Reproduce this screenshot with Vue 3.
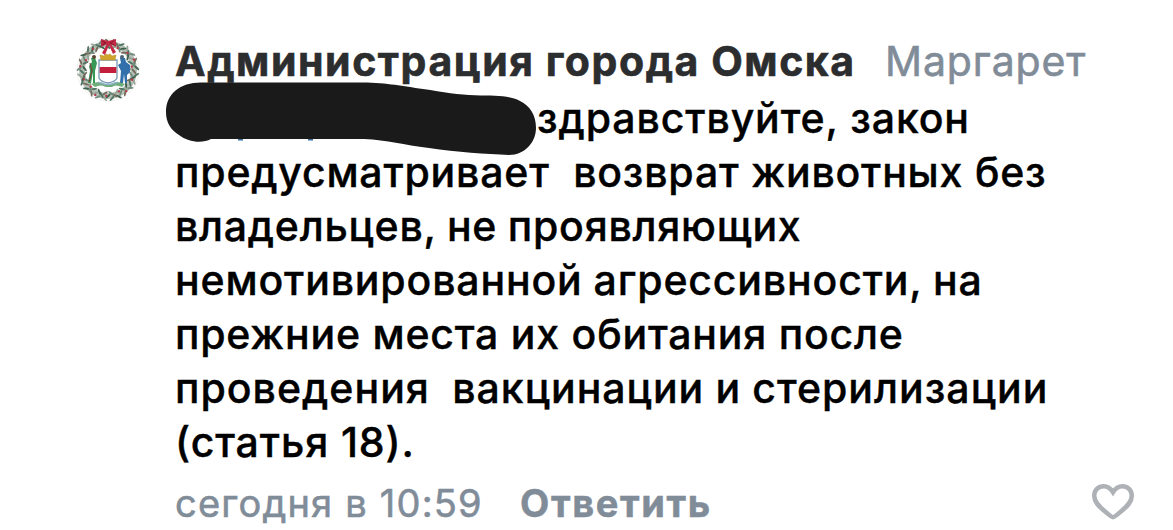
<script setup>
const author = 'Администрация города Омска'
const lines = [
  { id: 'l2', text: 'предусматривает  возврат животных без' },
  { id: 'l3', text: 'владельцев, не проявляющих' },
  { id: 'l4', text: 'немотивированной агрессивности, на' },
  { id: 'l5', text: 'прежние места их обитания после' },
  { id: 'l6', text: 'проведения  вакцинации и стерилизации' },
  { id: 'l7', text: '(статья 18).' },
]
// Leaves around the wreath, alternating inner and outer rows
const leaves = Array.from({ length: 75 }, (_, i) => ({
  angle: i * 4.8 + (i % 3) * 2,
  y: -23.5 - (i % 3) * 2.6,
  tilt: i % 2 ? 48 : -42,
  color: ['#527563', '#71897a', '#3f604c', '#98a698', '#756a5c'][i % 5],
}))
const berries = [24, 49, 68, 82, 112, 139, 153, 184, 207, 226, 249, 278, 294, 325]
</script>

<template>
  <article class="comment">
    <svg class="avatar" viewBox="-32 -32 64 64" aria-hidden="true">
      <circle r="31" fill="#fff" stroke="#e9eae8" stroke-width=".7" />
      <circle r="26" fill="none" stroke="#8b9c8d" stroke-width="6" opacity=".65" />
      <g v-for="(leaf, i) in leaves" :key="i" :transform="`rotate(${leaf.angle}) translate(0 ${leaf.y}) rotate(${leaf.tilt})`">
        <ellipse rx="1" ry="3.3" :fill="leaf.color" />
      </g>
      <circle v-for="(a, i) in berries" :key="'b' + a" r="1.15" :cy="-24 - (i % 3) * 2" :transform="`rotate(${a})`" fill="#bd3649" />
      <path d="M-9-10H9v18q-2 4-9 5-7-1-9-5z" fill="#fff" stroke="#7899b5" stroke-width="1.3" />
      <path d="M-8.3-3H8.3v6H-8.3z" fill="#c31f3c" />
      <path d="M-7-10l-1-5 4 1 2-2 2 1 2-1 2 2 4-1-1 5z" fill="#d1a52d" stroke="#b89337" stroke-width=".6" />
      <path d="M-17-12h4l2 5-2 8v12h-2V2l-2 11h-3l2-12-1-5 3-4z" fill="#3a9857" />
      <path d="M-18-7l2 8-3 11" fill="none" stroke="#7c403c" stroke-width="1.1" />
      <path d="M12-12h5l1 4 4 3v7l-3 3v8h-2l-1-9-1 9h-3l1-12-3-6 3-2z" fill="#3270ac" />
      <circle cx="-14" cy="-13" r="2" fill="#594435" />
      <circle cx="14" cy="-13" r="2" fill="#48627a" />
      <path d="M-17 14q9-4 14 0 3 2 6 0 5-4 14 0l-3 3q-7-3-10 0h-6q-5-3-11 0z" fill="#4b9a5b" opacity=".8" />
      <path d="M-10 12q9 5 20 0" fill="none" stroke="#8fb2d0" stroke-width="1.3" />
      <path d="M0-29l-7-2v8l6-3-5 9 3 2 4-10 4 9 3-2-5-8 5 3v-8z" fill="#c32945" />
      <path d="M-6-29l4 2-4 2M6-29l-4 2 4 2" fill="none" stroke="#86182f" />
    </svg>

    <div class="content">
      <header class="heading">
        <strong class="author">{{ author }}</strong>
        <span class="recipient">Маргарет</span>
      </header>
      <div class="body">
        <p class="line first">здравствуйте, закон</p>
        <p v-for="line in lines" :key="line.id" class="line" :class="line.id">{{ line.text }}</p>
      </div>
      <footer class="meta">
        <time class="time">сегодня в 10:59</time>
        <button class="reply" type="button">Ответить</button>
        <button class="like" type="button" aria-label="Нравится">
          <svg viewBox="0 0 44 38" aria-hidden="true">
            <path d="M22 34.2 C20.5 34.2 19 32.7 15 29.3 C7.5 23.2 3.2 18.8 3.2 12.8 C3.2 7 7.4 3.2 12.7 3.2 C17 3.2 20 6 22 9.2 C24 6 27 3.2 31.3 3.2 C36.6 3.2 40.8 7 40.8 12.8 C40.8 18.8 36.5 23.2 29 29.3 C25 32.7 23.5 34.2 22 34.2Z" />
          </svg>
        </button>
      </footer>
    </div>
    <svg class="redaction" viewBox="0 0 380 82" aria-hidden="true">
      <path d="M41 7.5H202C229 8 242 11 263 14C283 17 299 20 315 20.3C336 21 348 20 360 26C370 31 376 40 376 53C376 67 365 80 349 80C326 79 297 77 269 73C243 70 228 65 204 64H51C42 69 28 67 19 60C11 55 6 48 6 37C6 19 20 7.5 41 7.5Z" />
      <path class="trace" d="M78 64h5v1.500h-5zM148 64h5v1.500h-5z" />
    </svg>
  </article>
</template>

<style>
body { margin: 0; background: #fff; }
</style>

<style scoped>
.comment {
  position: relative;
  box-sizing: border-box;
  width: 1173px;
  height: 530px;
  padding: 35px 38px 0 76px;
  display: flex;
  gap: 35px;
  overflow: hidden;
  background: #fff;
  color: #000;
  font-family: Inter, "Liberation Sans", sans-serif;
  font-size: 41px;
}
.avatar { width: 64px; height: 64px; flex: none; margin-top: 3px; }
.content { flex: 1; min-width: 0; }
.heading { display: flex; height: 57px; line-height: 52px; white-space: nowrap; }
.author { width: 710px; color: #2c2d2f; font-weight: 700; letter-spacing: 1.55px; -webkit-text-stroke: .6px #2c2d2f; }
.recipient { color: #818c99; font-weight: 400; letter-spacing: .9px; -webkit-text-stroke: .6px #818c99; }
.line { margin: 0; height: 54px; line-height: 52px; font-weight: 500; letter-spacing: .9px; -webkit-text-stroke: .4px #000; white-space: pre; }
.first { padding-left: 362px; }
.l2 { letter-spacing: .8px; }
.l3 { letter-spacing: .75px; word-spacing: -1px; }
.l4 { letter-spacing: .85px; word-spacing: -.8px; }
.l5 { letter-spacing: .78px; }
.l6 { letter-spacing: 1.02px; word-spacing: -.8px; }
.meta { display: flex; height: 60px; margin-top: 6px; line-height: 54px; color: #818c99; font-size: 38px; white-space: nowrap; }
.time { width: 345px; letter-spacing: 1.2px; -webkit-text-stroke: .6px #818c99; }
button { padding: 0; border: 0; background: none; color: inherit; font: inherit; line-height: inherit; }
.reply { height: 54px; font-weight: 700; letter-spacing: 1.6px; -webkit-text-stroke: .5px #818c99; }
.like { width: 44px; height: 38px; margin: 7px 0 0 auto; }
.like svg { display: block; width: 44px; height: 38px; }
.like path { fill: none; stroke: #aeb1b6; stroke-width: 4.5; }
.redaction { position: absolute; left: 160px; top: 75px; width: 380px; height: 82px; fill: #1a1a1a; }
.trace { fill: #3c6c9b; }
</style>
